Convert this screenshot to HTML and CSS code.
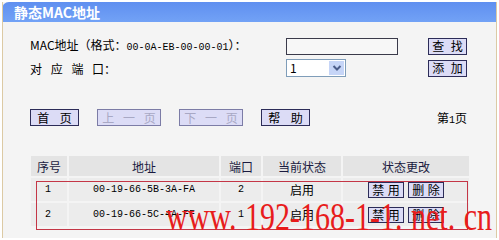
FILE: index.html
```html
<!DOCTYPE html>
<html lang="zh-CN">
<head>
    <meta charset="UTF-8">
    <title>静态MAC地址</title>
    <link rel="stylesheet" href="styles.css">
</head>
<body>

<div class="panel">
    <div class="panel-title">静态MAC地址</div>

    <div class="panel-body">
        <div class="form-row">
            <label for="mac-input">MAC地址（格式：<span class="mono">00-0A-EB-00-00-01</span>）：</label>
            <input id="mac-input" class="text-input" type="text">
            <button class="btn">查 找</button>
        </div>
        <div class="form-row port-row">
            <label class="spaced">对 应 端 口：</label>
            <div class="select-box">
                <span class="select-value">1</span>
                <span class="select-arrow">
                    <svg width="10" height="8" viewBox="0 0 10 8"><path d="M1.5 2 L5 5.5 L8.5 2" fill="none" stroke="#4b5d8a" stroke-width="2"/></svg>
                </span>
            </div>
            <button class="btn">添 加</button>
        </div>

        <div class="pager">
            <button class="btn btn-first">首 页</button>
            <button class="btn btn-wide" disabled>上 一 页</button>
            <button class="btn btn-wide" disabled>下 一 页</button>
            <button class="btn btn-first">帮 助</button>
            <span class="page-no">第<span class="mono">1</span>页</span>
        </div>

        <table class="list">
            <colgroup>
                <col class="c-no"><col class="c-addr"><col class="c-port"><col class="c-state"><col class="c-change">
            </colgroup>
            <thead>
                <tr><th>序号</th><th>地址</th><th>端口</th><th>当前状态</th><th>状态更改</th></tr>
            </thead>
            <tbody>
                <tr>
                    <td class="mono">1</td><td class="mono">00-19-66-5B-3A-FA</td><td class="mono">2</td><td>启用</td>
                    <td><button class="btn btn-small">禁 用</button><button class="btn btn-small">删 除</button></td>
                </tr>
                <tr>
                    <td class="mono">2</td><td class="mono">00-19-66-5C-4A-FF</td><td class="mono">1</td><td>启用</td>
                    <td><button class="btn btn-small">禁 用</button><button class="btn btn-small">删 除</button></td>
                </tr>
            </tbody>
        </table>
    </div>

    <!-- annotation + site watermark drawn over the table -->
    <div class="annot-box"></div>
    <div class="watermark">www. 192-168-1-1. net. cn</div>
</div>

</body>
</html>
```

FILE: styles.css
```css
:root {
    --panel-bg: #f4f4f4;
    --panel-edge: #dccaa4;
    --btn-bg: #dcdcf6;
    --btn-border: #2c2c58;
    --cell-head: #e4e4e4;
    --cell-body: #ececec;
}

body {
    margin: 0;
    background-color: #ffffff;
    font-family: "Noto Sans CJK SC", "Liberation Sans", sans-serif;
    font-size: 12px;
    word-spacing: 3px;
    color: #000000;
}

.mono {
    font-family: "Liberation Mono", monospace;
    font-size: 10px;
}

.panel {
    position: relative;
    margin: 2px 0 0 2px;
    width: 493px;
    height: 236px;
    background-color: var(--panel-bg);
    border-left: 1px solid var(--panel-edge);
    border-right: 1px solid var(--panel-edge);
    overflow: hidden;
}

.panel-title {
    height: 20px;
    line-height: 20px;
    padding-left: 12px;
    margin-left: -1px;
    background-image: linear-gradient(#5f8ff0, #72a2f6);
    border-radius: 7px 0 0 0;
    color: #ffffff;
    font-weight: bold;
    font-size: 14px;
}

.panel-body {
    padding: 14px 0 0 27px;
}

.form-row {
    display: grid;
    grid-template-columns: 256px 142px 40px;
    align-items: center;
    height: 17px;
}
.port-row {
    margin-top: 6px;
    height: 18px;
}
.form-row label {
    line-height: 17px;
}
.spaced {
    word-spacing: 6px;
}

.text-input {
    box-sizing: border-box;
    width: 112px;
    height: 17px;
    margin: 0;
    border: 1px solid #3a3a4a;
    background-color: #f7f7f7;
}

.select-box {
    box-sizing: border-box;
    display: flex;
    width: 60px;
    height: 18px;
    border: 1px solid #7f9db9;
    background-color: #ffffff;
}
.select-value {
    flex: 1;
    padding-left: 3px;
    line-height: 16px;
}
.select-arrow {
    display: flex;
    align-items: center;
    justify-content: center;
    width: 15px;
    margin: 1px;
    background-color: #c6d5f7;
}

.btn {
    box-sizing: border-box;
    height: 17px;
    margin: 0;
    padding: 0;
    border: 1px solid var(--btn-border);
    background-color: var(--btn-bg);
    font-family: "Noto Sans CJK SC", sans-serif;
    font-size: 12px;
    line-height: 14px;
    word-spacing: 4px;
    color: #000000;
}
.form-row .btn {
    width: 39px;
}
.btn:disabled {
    color: #a8a8c4;
    border-color: #7c7ca6;
    word-spacing: 6px;
}

.pager {
    display: flex;
    align-items: center;
    gap: 18px;
    margin-top: 32px;
    width: 437px;
}
.btn-first {
    width: 49px;
    word-spacing: 8px;
}
.btn-wide {
    width: 64px;
}
.page-no {
    margin-left: auto;
}

.list {
    margin: 28px 0 0 -1px;
    table-layout: fixed;
    border-spacing: 2px;
    width: 442px;
}
.c-no { width: 36px; }
.c-addr { width: 150px; }
.c-port { width: 40px; }
.c-state { width: 78px; }
.c-change { width: 126px; }

.list th {
    height: 20px;
    padding: 0;
    background-color: var(--cell-head);
    font-weight: normal;
    color: #1a1a40;
    text-align: center;
}
.list td {
    height: 23px;
    padding: 0;
    background-color: var(--cell-body);
    text-align: center;
}
.list td:first-child {
    text-align: left;
    padding-left: 14px;
}
.btn-small {
    width: 36px;
    height: 16px;
    margin: 0 2px;
    word-spacing: 1px;
}

.annot-box {
    position: absolute;
    left: 33px;
    top: 179px;
    width: 430px;
    height: 47px;
    border: 1px solid #c43646;
}

.watermark {
    position: absolute;
    left: 163px;
    top: 204px;
    font-family: "Liberation Serif", serif;
    font-size: 30px;
    line-height: 30px;
    color: #e81c1c;
    white-space: nowrap;
    word-spacing: 1px;
    transform: scaleY(1.3);
    transform-origin: left bottom;
}
```
